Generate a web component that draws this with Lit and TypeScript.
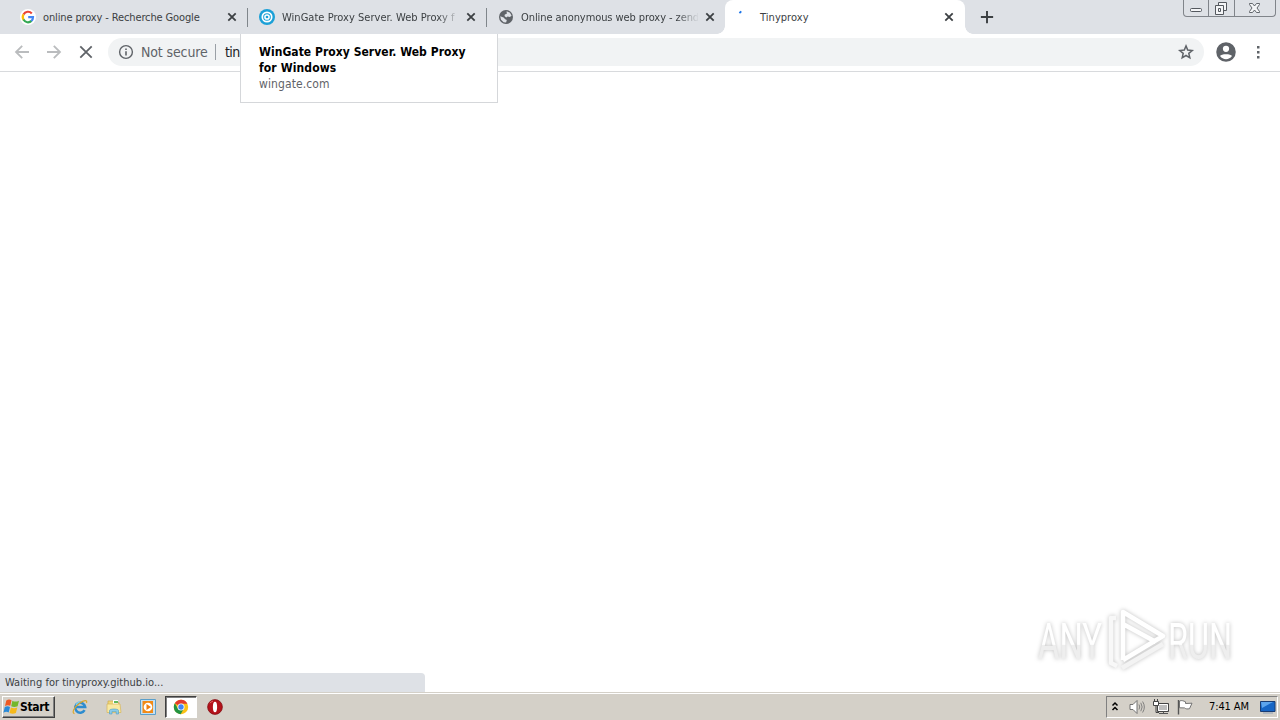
import { LitElement, html, css, svg } from 'lit';
import { customElement, property } from 'lit/decorators.js';
import { classMap } from 'lit/directives/class-map.js';

type IconName =
  | 'google' | 'wingate' | 'globe' | 'spinner' | 'close' | 'plus'
  | 'back' | 'forward' | 'stop' | 'info' | 'star' | 'account' | 'more'
  | 'windows' | 'ie' | 'folder' | 'player' | 'chrome' | 'opera'
  | 'chevrons' | 'volume' | 'network' | 'flag' | 'desktop';

const ICONS: Record<IconName, unknown> = {
  google: svg`
    <circle cx="8" cy="8" r="8" fill="#fff"/>
    <g fill="none" stroke-width="2.2">
      <path d="M11.8 4.4A5.1 5.1 0 0 0 3.5 5.5" stroke="#ea4335"/>
      <path d="M3.5 5.4A5.1 5.1 0 0 0 3.6 10.8" stroke="#fbbc05"/>
      <path d="M3.5 10.6A5.1 5.1 0 0 0 11.5 11.9" stroke="#34a853"/>
      <path d="M11.3 12A5 5 0 0 0 13 8.200H8.200" stroke="#4285f4"/>
    </g>`,
  wingate: svg`
    <circle cx="8" cy="8" r="8" fill="#1ba0d7"/>
    <circle cx="8" cy="8" r="4.700" fill="none" stroke="#fff" stroke-width="1.700"/>
    <circle cx="8" cy="8" r="2.100" fill="none" stroke="#fff" stroke-width="1.500"/>`,
  globe: svg`
    <circle cx="8" cy="8" r="7" fill="#5f6368"/>
    <path d="M8.6 2.2 12 3.7l1.6 3.1-1.8 1.3-2.2-.7-1.4 1-1.7-1.3.3-1.7 2-.7zM2.2 7.2l3.4 1.2 1.6 1.9 1.6.6-.7 2.7-2.5-.4-2.6-2.4z" fill="#dee1e6"/>`,
  spinner: svg`<path d="M2.400 4 4.300 2.300" stroke="#1a73e8" stroke-width="1.800"/>`,
  close: svg`<path d="m4.3 4.3 7.4 7.4m0-7.4-7.4 7.4" fill="none" stroke="#3c4043" stroke-width="1.8"/>`,
  plus: svg`<path d="M8 1v14M1 8h14" fill="none" stroke="#3c4043" stroke-width="2.200"/>`,
  back: svg`<path d="M15 8H2m6.2-6.2L2 8l6.2 6.2" fill="none" stroke="#babcbe" stroke-width="1.8"/>`,
  forward: svg`<path d="M1 8h13M7.8 1.8 14 8l-6.2 6.2" fill="none" stroke="#babcbe" stroke-width="1.8"/>`,
  stop: svg`<path d="m2.3 2.3 11.4 11.4m0-11.4L2.3 13.7" fill="none" stroke="#5f6368" stroke-width="1.8"/>`,
  info: svg`
    <circle cx="8" cy="8" r="6.4" fill="none" stroke="#5f6368" stroke-width="1.4"/>
    <path d="M8 7.2v4.2M8 4.4V6" stroke="#5f6368" stroke-width="1.6"/>`,
  star: svg`<path d="m8 1.9 1.7 4.2 4.5.4-3.4 2.9 1 4.4L8 11.5l-3.8 2.3 1-4.4-3.4-2.9 4.5-.4z" fill="none" stroke="#5f6368" stroke-width="1.5"/>`,
  account: svg`
    <circle cx="8" cy="8" r="7.800" fill="#5f6368"/>
    <circle cx="8" cy="5.4" r="2.5" fill="#fff"/>
    <path d="M3.2 11.2c.9-2 8.7-2 9.6 0A5.8 5.8 0 0 1 3.2 11.2z" fill="#fff"/>`,
  more: svg`<path d="M7 2h2.500v2.500H7zm0 5h2.500v2.500H7zm0 5h2.500v2.500H7z" fill="#5f6368"/>`,
  windows: svg`
    <path d="M2.3 1.500c2-1.3 3.7-1.1 5.2-.2L6.3 6.800C4.6 5.900 2.900 5.900 1 7z" fill="#ee5a24"/>
    <path d="M8.400 1.700c2 1.200 4 1.100 6.600 0L13.600 7.300c-2.200 1-4.500 1-6.400 0z" fill="#74b72b"/>
    <path d="M.800 8c1.900-1 3.500-1 5.200 0L4.700 13.500C3.100 12.600 1.400 12.600-.600 13.700z" fill="#2a8ad8"/>
    <path d="M6.900 8.400c2 1 4.200 1 6.400 0l-1.400 5.600c-2.200 1.100-4.300 1-6.400 0z" fill="#f6b91a"/>`,
  ie: svg`
    <path d="M12.600 11.200a5 5 0 1 1 .6-3.200H4.200" fill="none" stroke="#2d8ccf" stroke-width="2.500"/>
    <path d="M8.300 2.900a4.800 4.800 0 0 0-4.200 3" fill="none" stroke="#7bd0f4" stroke-width="1.300"/>
    <path d="M2.500 14.600C-.800 14 2.400 7.800 7.500 4.200c4.400-3.200 8.200-3.700 7-.2" fill="none" stroke="#d9a72c" stroke-width="1.200"/>`,
  folder: svg`
    <path d="M2 2h5l1 1.500h5v9H2z" fill="#f2d777" stroke="#cfae52" stroke-width=".7"/>
    <path d="M7 1h5v5H7z" fill="#fff"/><path d="M8 2h4v2H8z" fill="#62b95c"/>
    <path d="M1 5h13l1 8.500H1z" fill="#f9e9a2" stroke="#d4b55c" stroke-width=".7"/>
    <path d="M3.500 15v-3.500c0-2 9-2 9 0V15h-2.300v-2.500H6V15z" fill="#8ccbe8" stroke="#4d9fc6" stroke-width=".6"/>`,
  player: svg`
    <path d="M.5.500h15v15H.5z" fill="#c4e0f3" stroke="#5b9fca"/>
    <path d="M2.500 2h10.500v12H2.500z" fill="#f28a16"/>
    <circle cx="8" cy="8" r="4.300" fill="#fff"/>
    <path d="m6.500 5 4.500 3-4.500 3z" fill="#ef7d0c"/>`,
  chrome: svg`
    <circle cx="8" cy="8" r="7.200" fill="#fbc116"/>
    <path d="M8 8 1.800 4.300A7.200 7.200 0 0 1 14.400 4.700H8z" fill="#e33b2e"/>
    <path d="M1.800 4.300A7.200 7.200 0 0 0 7.600 15.200L11 9.600 5 9.700z" fill="#229342"/>
    <circle cx="8" cy="8" r="3.500" fill="#fff"/><circle cx="8" cy="8" r="2.700" fill="#4285f4"/>`,
  opera: svg`
    <circle cx="8" cy="8" r="7.400" fill="#b4121a" stroke="#7d070d" stroke-width=".7"/>
    <ellipse cx="8" cy="8" rx="2.100" ry="5.300" fill="#fff"/>
    <path d="M3 4.200A6 6 0 0 1 6 2" stroke="#ef6b6b" fill="none"/>`,
  chevrons: svg`<path d="m5.500 6.500 2.500-2.500 2.500 2.500m-5 4.500L8 8.500l2.500 2.500" fill="none" stroke="#000" stroke-width="1.500"/>`,
  volume: svg`
    <path d="M1 5.500h3L8 1.500v13L4 10.500H1z" fill="#fff" stroke="#666" stroke-width=".9"/>
    <path d="M10 5.500q1.500 2.500 0 5M11.800 3.800q2.700 4.200 0 8.400M13.600 2.500q3.500 5.500 0 11" fill="none" stroke="#777" stroke-width=".9"/>`,
  network: svg`
    <path d="M4.500 4.500h11v8h-11z" fill="#bdbdbd" stroke="#444"/>
    <path d="M5.500 5.500h9v6h-9z" fill="none" stroke="#fff"/>
    <path d="M6 14.500h9M10.500 12.500v2" stroke="#555"/>
    <path d="M.500 2.500h5v4h-5zM1.500 0v2M4.500 0v2" fill="#fff" stroke="#444"/>
    <path d="M3 6.500v7h3" fill="none" stroke="#444"/>`,
  flag: svg`
    <path d="M1.500 1v14.500" stroke="#555" stroke-width="1.400"/>
    <path d="M2.500 2c2.500-1 4 0 6 .8v1.700l6.500-.3-2.500 5.500c-2 .5-4 .2-5-.8l-5-.1z" fill="#fff" stroke="#666" stroke-width=".9"/>`,
  desktop: svg`
    <path d="M.5 2.500h14.500v10H.5z" fill="#1766c5" stroke="#193c73"/>
    <path d="M1 3h12L2 9z" fill="#5da5ed"/>
    <path d="M3 14h10" stroke="#8ea0b8"/>`,
};

@customElement('ui-icon')
export class UiIcon extends LitElement {
  static override styles = css`
    :host {
      display: block;
      flex: none;
      width: 16px;
      height: 16px;
    }

    svg {
      display: block;
      width: 100%;
      height: 100%;
      overflow: visible;
    }
  `;

  @property({ type: String })
  name: IconName = 'close';

  override render() {
    return html`<svg viewBox="0 0 16 16" aria-hidden="true">${ICONS[this.name]}</svg>`;
  }
}

interface Tab {
  title: string;
  icon: IconName;
  cls: string;
  active?: boolean;
}

const TABS: Tab[] = [
  { title: 'online proxy - Recherche Google', icon: 'google', cls: 't1' },
  { title: 'WinGate Proxy Server. Web Proxy f', icon: 'wingate', cls: 't2' },
  { title: 'Online anonymous web proxy - zend', icon: 'globe', cls: 't3' },
  { title: 'Tinyproxy', icon: 'spinner', cls: 't4', active: true },
];

const TASKS: IconName[] = ['ie', 'folder', 'player', 'chrome', 'opera'];

@customElement('app-root')
export class AppRoot extends LitElement {
  static override styles = css`
    :host {
      display: flex;
      flex-direction: column;
      position: relative;
      width: 1280px;
      height: 720px;
      overflow: hidden;
      background: #fff;
      color: #3c4043;
      font: 11px/16px 'DejaVu Sans Condensed', 'DejaVu Sans', sans-serif;
      font-stretch: condensed;
      white-space: nowrap;
    }

    * {
      box-sizing: border-box;
    }

    /* Tab strip */
    .tabs {
      display: flex;
      height: 34px;
      padding-left: 8px;
      background: #dee1e6;
    }

    .tab {
      display: flex;
      align-items: center;
      position: relative;
      width: 239px;
      padding: 0 7px 0 12px;
    }

    .title {
      flex: 1;
      min-width: 0;
      margin: 1px 4px 0 7px;
    }

    .t2 .title,
    .t3 .title {
      mask-image: linear-gradient(90deg, #000 156px, transparent 178px);
    }

    .t1 + .tab::before,
    .t2 + .tab::before {
      content: '';
      position: absolute;
      left: 0;
      top: 8px;
      width: 1px;
      height: 19px;
      background: #80868b;
    }

    .t1 .title { letter-spacing: -0.13px; }
    .t2 .title { letter-spacing: 0.03px; }
    .t3 .title { letter-spacing: -0.08px; }
    .t4 .title { letter-spacing: 0.05px; }

    .active {
      width: 240px;
      padding-right: 8px;
      border-radius: 8px 8px 0 0;
      background: #fff;
    }

    .active::before,
    .active::after {
      content: '';
      position: absolute;
      bottom: 0;
      left: -8px;
      width: 8px;
      height: 8px;
      background: radial-gradient(circle at 0 0, transparent 7.5px, #fff 8px);
    }

    .active::after {
      left: 100%;
      transform: scaleX(-1);
    }

    .new {
      width: 14px;
      height: 14px;
      margin: 10px 0 0 15px;
    }

    .caption {
      display: flex;
      width: 93px;
      height: 17px;
      margin: 0 4px 0 auto;
      border: 1px solid #80848a;
      border-top: 0;
      border-radius: 0 0 4px 4px;
    }

    .caption svg {
      display: block;
      width: 91px;
      height: 16px;
    }

    /* Toolbar */
    .toolbar {
      display: flex;
      align-items: center;
      height: 38px;
      padding: 0 14px 1px;
      border-bottom: 1px solid #d8dadd;
      background: #fff;
    }

    .toolbar > ui-icon {
      margin-right: 16px;
    }

    .toolbar > .stop {
      margin-right: 14px;
    }

    .omnibox {
      display: flex;
      align-items: center;
      flex: 1;
      height: 28px;
      padding: 0 10px;
      border-radius: 14px;
      background: #f1f3f4;
      font-size: 14px;
    }

    .secure {
      width: 68px;
      margin: 0 6px 0 7px;
      color: #5f6368;
      letter-spacing: -0.13px;
    }

    .rule {
      width: 1px;
      height: 16px;
      margin-right: 9px;
      background: #9aa0a6;
    }

    .url {
      flex: 1;
      color: #202124;
      letter-spacing: -0.6px;
    }

    .toolbar > .account {
      width: 20px;
      height: 20px;
      margin: 0 14px 0 12px;
    }

    .toolbar > .more {
      margin: 0;
    }

    .hover-card {
      position: absolute;
      left: 240px;
      top: 34px;
      width: 258px;
      height: 69px;
      padding: 10px 18px;
      border: 1px solid #d5d7da;
      border-top: 0;
      background: #fff;
      font-size: 12px;
    }

    .hover-card b {
      display: block;
      color: #000;
      letter-spacing: 0.04px;
    }

    .hover-card b + b {
      letter-spacing: 0.12px;
    }

    .domain {
      color: #5f6368;
      letter-spacing: 0.1px;
    }

    main {
      flex: 1;
    }

    .watermark {
      position: absolute;
      left: 1030px;
      top: 604px;
      width: 210px;
      height: 74px;
      filter: drop-shadow(0 0 2px rgba(0, 0, 0, 0.25));
    }

    .watermark text {
      font: 400 50px Roboto, sans-serif;
    }

    .status {
      width: 425px;
      height: 19px;
      padding: 2px 5px;
      border-radius: 0 4px 0 0;
      background: #dee1e6;
      letter-spacing: 0.02px;
    }

    /* Taskbar */
    .taskbar {
      display: flex;
      align-items: center;
      height: 28px;
      padding: 0 2px;
      border-top: 1px solid #d4d0c8;
      background: #d4d0c8;
      box-shadow: inset 0 1px #fff;
      color: #000;
    }

    .start {
      display: flex;
      align-items: center;
      flex: none;
      width: 53px;
      height: 22px;
      margin-right: 9px;
      padding-left: 1px;
      border: 1px solid;
      border-color: #fff #404040 #404040 #fff;
      box-shadow: inset -1px -1px #808080;
      font-weight: 700;
      font-size: 12px;
      letter-spacing: -0.35px;
    }

    .task {
      display: flex;
      align-items: center;
      justify-content: center;
      flex: none;
      width: 32px;
      height: 22px;
      margin-right: 1.8px;
      border: 1px solid transparent;
    }

    .pressed {
      border-color: #404040 #fff #fff #404040;
      background: #fff;
      box-shadow: inset 1px 1px #808080;
    }

    .tray {
      display: flex;
      align-items: center;
      flex: none;
      width: 172px;
      height: 22px;
      margin-left: auto;
      border: 1px solid;
      border-color: #808080 #fff #fff #808080;
    }

    .tray ui-icon {
      margin-right: 8px;
    }

    .tray .chevrons {
      margin-right: 6px;
    }

    .clock {
      width: 41px;
      margin: 0 10px 0 8px;
      letter-spacing: -0.12px;
    }

    .tray .desktop {
      margin: 0;
    }
  `;

  private _renderTab(tab: Tab) {
    return html`
      <div class=${classMap({ tab: true, [tab.cls]: true, active: !!tab.active })}>
        <ui-icon name=${tab.icon}></ui-icon>
        <span class="title">${tab.title}</span>
        <ui-icon name="close"></ui-icon>
      </div>
    `;
  }

  private _renderTask(name: IconName) {
    return html`
      <div class=${classMap({ task: true, pressed: name === 'chrome' })}>
        <ui-icon name=${name}></ui-icon>
      </div>
    `;
  }

  override render() {
    return html`
      <header class="tabs">
        ${TABS.map((tab) => this._renderTab(tab))}
        <ui-icon class="new" name="plus"></ui-icon>
        <div class="caption">
          <svg viewBox="0 0 91 16">
            <path d="M24.500 0v16M50.500 0v16" stroke="#80848a"/>
            <g fill="#f4f5f7" stroke="#54585e">
              <rect x="6.500" y="8.500" width="11" height="3" rx="1"/>
              <path d="M34.500 2.500h8v8h-8z"/>
              <path d="M31.500 5.500h8v9h-8z"/>
              <path d="M34.500 8.500h2v3h-2z"/>
              <path d="M65.500 3.500h3l2 2.500 2-2.500h3v1L73 8l2.500 3.500v1h-3l-2-2.500-2 2.500h-3v-1L68 8l-2.500-3.500z" stroke-width=".9"/>
            </g>
          </svg>
        </div>
      </header>

      <nav class="toolbar">
        <ui-icon name="back"></ui-icon>
        <ui-icon name="forward"></ui-icon>
        <ui-icon class="stop" name="stop"></ui-icon>
        <div class="omnibox">
          <ui-icon name="info"></ui-icon>
          <span class="secure">Not secure</span>
          <span class="rule"></span>
          <span class="url">tin</span>
          <ui-icon name="star"></ui-icon>
        </div>
        <ui-icon class="account" name="account"></ui-icon>
        <ui-icon class="more" name="more"></ui-icon>
      </nav>

      <main></main>

      <footer class="status">Waiting for tinyproxy.github.io...</footer>

      <div class="taskbar">
        <div class="start"><ui-icon name="windows"></ui-icon>Start</div>
        ${TASKS.map((name) => this._renderTask(name))}
        <div class="tray">
          <ui-icon class="chevrons" name="chevrons"></ui-icon>
          <ui-icon name="volume"></ui-icon>
          <ui-icon name="network"></ui-icon>
          <ui-icon name="flag"></ui-icon>
          <span class="clock">7:41 AM</span>
          <ui-icon class="desktop" name="desktop"></ui-icon>
        </div>
      </div>

      <div class="hover-card">
        <b>WinGate Proxy Server. Web Proxy</b>
        <b>for Windows</b>
        <span class="domain">wingate.com</span>
      </div>

      <svg class="watermark" viewBox="0 0 210 74">
        <defs>
          <linearGradient id="fade" x1="0" y1="0" x2="0" y2="1">
            <stop offset="0.54" stop-color="#fff"/>
            <stop offset="0.56" stop-color="#eee"/>
          </linearGradient>
        </defs>
        <text x="8" y="55" textLength="64" lengthAdjust="spacingAndGlyphs" fill="url(#fade)">ANY</text>
        <text x="138" y="55" textLength="64" lengthAdjust="spacingAndGlyphs" fill="url(#fade)">RUN</text>
        <g fill="none" stroke-width="4.500" stroke-linejoin="round">
          <path d="m92 64 41-24" stroke="#f3f3f3"/>
          <path d="M86 14h-5v45l6 3" stroke="#f8f8f8"/>
          <path d="M93 56V8l40 24-40 24M93 20l33 18" stroke="#fff"/>
        </g>
      </svg>
    `;
  }
}
